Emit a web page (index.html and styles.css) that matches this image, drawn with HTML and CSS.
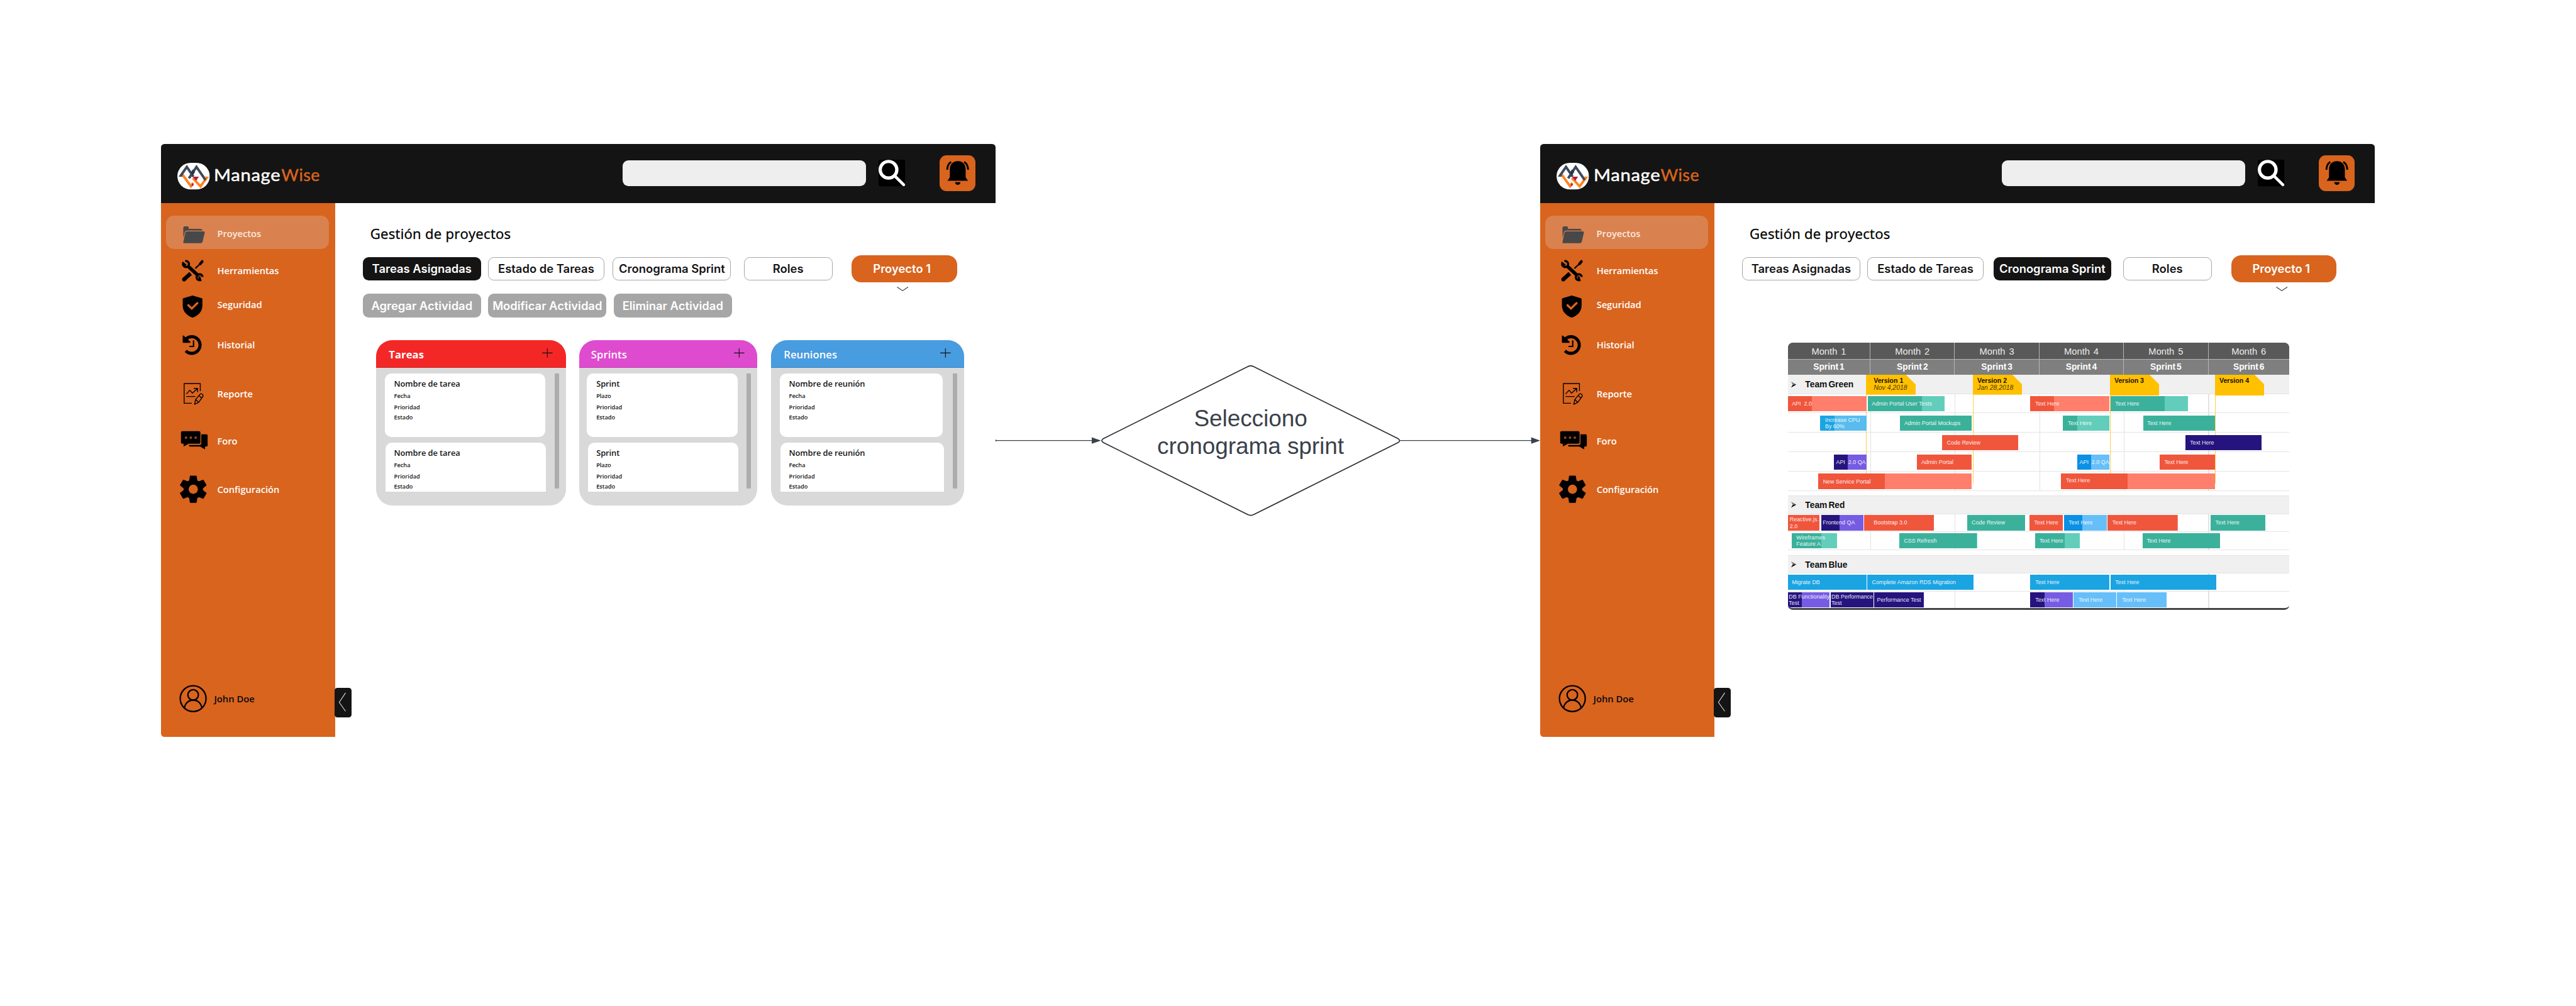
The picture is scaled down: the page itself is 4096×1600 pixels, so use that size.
FILE: index.html
```html
<!DOCTYPE html>
<html lang="es">
<head>
<meta charset="utf-8">
<title>ManageWise</title>
<link rel="stylesheet" href="styles.css">
</head>
<body>
<svg class="defs" aria-hidden="true">
  <symbol id="logo" viewBox="48 33 168 138">
    <rect x="48" y="33" width="168" height="138" rx="69" fill="#fff"/>
    <g fill="none" stroke-width="13">
      <path d="M128 112 168 155 203 106" stroke="#ff8421"/>
      <path d="M69 86 118 154 130 137" stroke="#ff8421"/>
      <path d="M108 113 147 54 194 122" stroke="#3c4a5e"/>
      <path d="M64 102 97 54 131 104" stroke="#3c4a5e"/>
    </g>
    <path d="M117 83l12-17 10 16-12 17z" fill="#2b3547"/>
    <path d="M53 105 68 90 76 105Z" fill="#3c4a5e"/>
    <path d="M188 105h24l-12 14z" fill="#ff8421"/>
    <path d="M128 105h31l-14 22zM125 138l9 9-13 10z" fill="#b5173b"/>
  </symbol>
  <symbol id="search" viewBox="78 78 138 138">
    <rect x="78" y="78" width="138" height="138" rx="10"/>
    <circle cx="129.500" cy="130" r="43" fill="none" stroke="#fff" stroke-width="17"/>
    <path d="M166 166 208 208" stroke="#fff" stroke-width="15" stroke-linecap="round"/>
  </symbol>
  <symbol id="bell" viewBox="393 54 186 186">
    <path d="M446 125C446 98 465 84 487 84S528 98 528 125V168L540 186H434L446 168Z"/>
    <path d="M473 193H501A14 14 0 0 1 473 193Z"/>
    <path d="M453 88Q433 100 432.500 129M520 88Q540 100 540.500 129" fill="none" stroke="#000" stroke-width="9"/>
  </symbol>
  <symbol id="folder" viewBox="57 340 144 120">
    <g fill="#484848">
      <path d="M78 371q0-8 8-8h14q6 0 6 7v6h62q8 1 10 9H99q-12 0-14 10L78 422Z"/>
      <path d="M98 389H184q6 0 5 6L178 442q-2 8-9 8H82q-5 0-4-5L88 396q2-7 10-7Z"/>
    </g>
  </symbol>
  <symbol id="tools" viewBox="57 532.500 144 120">
    <g fill="none" stroke="#000">
      <path d="M102 569 156 619" stroke-width="18"/>
      <path d="M88 543.500A15.500 15.500 0 1 1 77 554L92 566" stroke-width="11"/>
      <path d="M178 625A15.500 15.500 0 1 0 166 642L160 622" stroke-width="11"/>
      <path d="M82 638 116 607" stroke-width="20"/>
      <path d="M82 638h0" stroke-width="20" stroke-linecap="round"/>
      <path d="M140 581 166 557" stroke-width="7"/>
      <path d="M166 557 176 545" stroke-width="14" stroke-linecap="round"/>
    </g>
  </symbol>
  <symbol id="shield" viewBox="57 697 144 138">
    <path d="M126 720 173 734q4 1 4 6v30C177 803 155 824 126 835 97 824 75 803 75 770v-30q0-5 4-6Z"/>
    <path d="M104 770 122 787 151 759" fill="none" stroke="#d9641e" stroke-width="11" stroke-linecap="round"/>
  </symbol>
  <symbol id="history" viewBox="57 917 144 117">
    <path d="M91 1008A43 43 0 1 0 92 947" fill="none" stroke="#000" stroke-width="16"/>
    <path d="M75 932q1-6 6-2l34 31q2 6-4 6H79q-4 0-4-4Z"/>
    <path d="M131 954V985.500H109" fill="none" stroke="#000" stroke-width="7"/>
  </symbol>
  <symbol id="report" viewBox="31 411.800 48 40">
    <g fill="none" stroke="#000" stroke-width="1.500" stroke-linejoin="round">
      <path d="M67.300 427V414H39.500V448H52.700"/>
      <path d="M43.300 432 49.300 425.500 53.700 430.600 62.500 422.600M56 422.400H62.700V429M43.300 436.300H58.700"/>
      <path d="M57.500 449.800 59.300 441.500 67 432.300Q68.500 430.800 70 432L71.800 433.600Q72.800 435 71.700 436.500L64.500 446.500ZM59.300 441.500 64.500 446.500M65 434.500 69.800 439.200"/>
    </g>
  </symbol>
  <symbol id="forum" viewBox="31 492.800 50 40">
    <rect x="34" y="497" width="33.600" height="21.700" rx="2.500"/>
    <path d="M38.500 517v6.500l9-5z"/>
    <path d="M69 502.400h9a2 2 0 0 1 2 2v17a2 2 0 0 1-2 2h-2.500v5l-8.500-5H48.500l-1-2.600H66a3 3 0 0 0 3-3z"/>
    <g fill="#d9641e"><circle cx="42.700" cy="508" r="2"/><circle cx="51" cy="508" r="2"/><circle cx="59.300" cy="508" r="2"/></g>
    <g><circle cx="42.700" cy="508" r=".7"/><circle cx="51" cy="508" r=".7"/><circle cx="59.300" cy="508" r=".7"/></g>
  </symbol>
  <symbol id="gear" viewBox="31.500 572.700 48 48">
    <g id="tooth-pair"><path d="M49.800 574q.2-.8 1-.8h9.800q.8 0 1 .8L62.800 582H48.600ZM49.800 619.400q.2.800 1 .8h9.800q.8 0 1-.8L62.800 611H48.600Z"/></g>
    <use href="#tooth-pair" transform="rotate(60 55.700 596.700)"/>
    <use href="#tooth-pair" transform="rotate(120 55.700 596.700)"/>
    <circle cx="55.700" cy="596.700" r="16.800"/>
    <circle cx="55.700" cy="596.700" r="8" fill="#d9641e"/>
  </symbol>
  <symbol id="user" viewBox="31.500 933.900 48 48">
    <g fill="none" stroke="#000" stroke-width="2.500">
      <circle cx="55.500" cy="957.900" r="22.300"/>
      <circle cx="55.500" cy="951.500" r="9"/>
      <path d="M40.300 974.500C41.500 965.500 48 960.500 55.500 960.500S69.500 965.500 70.700 974.500"/>
    </g>
  </symbol>
  <symbol id="bullet" viewBox="0 0 9 10">
    <path d="M0 0 9 5 0 10 3 5.500Z" fill="#777"/><path d="M3 5.300 9 5 0 10Z"/>
  </symbol>
</svg>

<main class="board">
  <section class="window">
    <header class="topbar">
      <svg class="logo"><use href="#logo"/></svg>
      <div class="brand"><span class="brand-a">Manage</span><span class="brand-b">Wise</span></div>
      <div class="searchbox"></div>
      <svg class="search-icon"><use href="#search"/></svg>
      <div class="bell"><svg><use href="#bell"/></svg></div>
    </header>
    <div class="body">
      <nav class="sidebar">
        <div class="item item-projects"><svg class="h40"><use href="#folder"/></svg><span>Proyectos</span></div>
        <div class="item item-tools"><svg class="h40"><use href="#tools"/></svg><span>Herramientas</span></div>
        <div class="item item-security"><svg class="h46"><use href="#shield"/></svg><span>Seguridad</span></div>
        <div class="item item-history"><svg class="h39"><use href="#history"/></svg><span>Historial</span></div>
        <div class="item item-report"><svg class="h40"><use href="#report"/></svg><span>Reporte</span></div>
        <div class="item item-forum"><svg class="h40 wide"><use href="#forum"/></svg><span>Foro</span></div>
        <div class="item item-settings"><svg class="h48"><use href="#gear"/></svg><span>Configuración</span></div>
        <div class="account"><svg><use href="#user"/></svg><span>John Doe</span></div>
        <div class="collapse"><svg viewBox="0 0 30 51"><path d="M19 8.500 8 25 19 40.500" fill="none" stroke="#ddd" stroke-width="1.200"/></svg></div>
      </nav>
      <div class="content">
        <h1>Gestión de proyectos</h1>
        <div class="tabs">
          <div class="tab active">Tareas Asignadas</div>
          <div class="tab tab-state">Estado de Tareas</div>
          <div class="tab tab-sprint">Cronograma Sprint</div>
          <div class="tab tab-roles">Roles</div>
          <div class="project">Proyecto 1<svg class="chevron" viewBox="0 0 20 8"><path d="M.5.500 10 7 19.500.500" fill="none" stroke="#333" stroke-width="1.200"/></svg></div>
        </div>
        <div class="actions">
          <div class="action">Agregar Actividad</div>
          <div class="action">Modificar Actividad</div>
          <div class="action">Eliminar Actividad</div>
        </div>
        <div class="lists">
          <section class="list list-tasks">
            <header><h2>Tareas</h2><svg class="plus" viewBox="0 0 18 16"><path d="M0 8H18M9 0V16"/></svg></header>
            <div class="list-body">
              <div class="cards">
                <article class="card"><h3>Nombre de tarea</h3><p>Fecha</p><p>Prioridad</p><p>Estado</p></article>
                <article class="card cut"><h3>Nombre de tarea</h3><p>Fecha</p><p>Prioridad</p><p>Estado</p></article>
              </div>
              <div class="scroll"></div>
            </div>
          </section>
          <section class="list list-sprints">
            <header><h2>Sprints</h2><svg class="plus" viewBox="0 0 18 16"><path d="M0 8H18M9 0V16"/></svg></header>
            <div class="list-body">
              <div class="cards">
                <article class="card"><h3>Sprint</h3><p>Plazo</p><p>Prioridad</p><p>Estado</p></article>
                <article class="card cut"><h3>Sprint</h3><p>Plazo</p><p>Prioridad</p><p>Estado</p></article>
              </div>
              <div class="scroll"></div>
            </div>
          </section>
          <section class="list list-meetings">
            <header><h2>Reuniones</h2><svg class="plus" viewBox="0 0 18 16"><path d="M0 8H18M9 0V16"/></svg></header>
            <div class="list-body">
              <div class="cards">
                <article class="card"><h3>Nombre de reunión</h3><p>Fecha</p><p>Prioridad</p><p>Estado</p></article>
                <article class="card cut"><h3>Nombre de reunión</h3><p>Fecha</p><p>Prioridad</p><p>Estado</p></article>
              </div>
              <div class="scroll"></div>
            </div>
          </section>
        </div>
      </div>
    </div>
  </section>

  <div class="flow">
    <svg class="link link-in" viewBox="0 0 182 20"><path d="M.5 9V12M.5 10.500H166" stroke="#3a414a" stroke-width="1.500" fill="none"/><path d="M166 5 182 10.500 166 16Z" fill="#3a414a"/></svg>
    <div class="decision">
      <svg viewBox="0 0 516 260"><path d="M252.500 2.500Q258 -.5 263.500 2.500L512 126.500Q518 130 512 133.500L263.500 257.500Q258 260.500 252.500 257.500L4 133.500Q-2 130 4 126.500Z" fill="#fff" stroke="#282c33" stroke-width="1.800"/></svg>
      <p>Selecciono<br>cronograma sprint</p>
    </div>
    <svg class="link link-out" viewBox="0 0 242 20"><path d="M0 10.500H227" stroke="#3a414a" stroke-width="1.500"/><path d="M226.500 5 242 10.500 226.500 16Z" fill="#3a414a"/></svg>
  </div>

  <section class="window">
    <header class="topbar">
      <svg class="logo"><use href="#logo"/></svg>
      <div class="brand"><span class="brand-a">Manage</span><span class="brand-b">Wise</span></div>
      <div class="searchbox"></div>
      <svg class="search-icon"><use href="#search"/></svg>
      <div class="bell"><svg><use href="#bell"/></svg></div>
    </header>
    <div class="body">
      <nav class="sidebar">
        <div class="item item-projects"><svg class="h40"><use href="#folder"/></svg><span>Proyectos</span></div>
        <div class="item item-tools"><svg class="h40"><use href="#tools"/></svg><span>Herramientas</span></div>
        <div class="item item-security"><svg class="h46"><use href="#shield"/></svg><span>Seguridad</span></div>
        <div class="item item-history"><svg class="h39"><use href="#history"/></svg><span>Historial</span></div>
        <div class="item item-report"><svg class="h40"><use href="#report"/></svg><span>Reporte</span></div>
        <div class="item item-forum"><svg class="h40 wide"><use href="#forum"/></svg><span>Foro</span></div>
        <div class="item item-settings"><svg class="h48"><use href="#gear"/></svg><span>Configuración</span></div>
        <div class="account"><svg><use href="#user"/></svg><span>John Doe</span></div>
        <div class="collapse"><svg viewBox="0 0 30 51"><path d="M19 8.500 8 25 19 40.500" fill="none" stroke="#ddd" stroke-width="1.200"/></svg></div>
      </nav>
      <div class="content">
        <h1>Gestión de proyectos</h1>
        <div class="tabs">
          <div class="tab">Tareas Asignadas</div>
          <div class="tab tab-state">Estado de Tareas</div>
          <div class="tab tab-sprint active">Cronograma Sprint</div>
          <div class="tab tab-roles">Roles</div>
          <div class="project">Proyecto 1<svg class="chevron" viewBox="0 0 20 8"><path d="M.5.500 10 7 19.500.500" fill="none" stroke="#333" stroke-width="1.200"/></svg></div>
        </div>
        <div class="gantt">
          <div class="months"><span>Month 1</span><span>Month 2</span><span>Month 3</span><span>Month 4</span><span>Month 5</span><span>Month 6</span></div>
          <div class="sprints"><span>Sprint 1</span><span>Sprint 2</span><span>Sprint 3</span><span>Sprint 4</span><span>Sprint 5</span><span>Sprint 6</span></div>
          <div class="team team-green"><svg><use href="#bullet"/></svg>Team Green</div>
          <div class="lanes lanes-green">
            <div class="lane">
              <div class="bar red" style="--x:0;--w:135.700;--d:40.700;--p:7">API&nbsp; 2.0</div>
              <div class="bar teal" style="--x:138;--w:132.300;--d:93;--p:7">Admin Portal User Tests</div>
              <div class="bar red" style="--x:418.300;--w:137;--d:41.400;--p:8.700">Text Here</div>
              <div class="bar teal" style="--x:557.300;--w:132.700;--d:93;--p:7.700">Text Here</div>
            </div>
            <div class="lane">
              <div class="bar blue" style="--x:55.300;--w:80.400;--d:24.700;--p:9">Increase CPU<br>By 60%</div>
              <div class="bar teal" style="--x:193.300;--w:124.400;--d:125;--p:7.700">Admin Portal Mockups</div>
              <div class="bar teal" style="--x:474.700;--w:80.600;--d:25;--p:8.600">Text Here</div>
              <div class="bar teal" style="--x:613;--w:124.700;--d:125;--p:7.300">Text Here</div>
            </div>
            <div class="lane">
              <div class="bar red" style="--x:266.300;--w:131.700;--d:132;--p:8.400">Code Review</div>
              <div class="bar navy" style="--x:685.700;--w:132;--d:132;--p:8.300">Text Here</div>
            </div>
            <div class="lane">
              <div class="bar navy" style="--x:80;--w:55.700;--d:24;--p:3.300">API&nbsp; 2.0 QA</div>
              <div class="bar red" style="--x:222.700;--w:95;--d:95;--p:7.600">Admin Portal</div>
              <div class="bar azure" style="--x:499;--w:56.300;--d:24.300;--p:4.300">API&nbsp; 2.0 QA</div>
              <div class="bar red" style="--x:642;--w:95.700;--d:96;--p:7.700">Text Here</div>
            </div>
            <div class="lane">
              <div class="bar red" style="--x:52.300;--w:265.400;--d:115;--p:8.400">New Service Portal</div>
              <div class="bar red raised" style="--x:471.700;--w:266;--d:115.300;--p:8.300">Text Here</div>
            </div>
          </div>
          <div class="team team-red"><svg><use href="#bullet"/></svg>Team Red</div>
          <div class="lanes lanes-red">
            <div class="lane">
              <div class="bar red" style="--x:0;--w:54.700;--d:55;--p:3.300">Reactive.js.<br>2.0</div>
              <div class="bar navy" style="--x:57.300;--w:72.700;--d:31.700;--p:3">Frontend QA</div>
              <div class="bar red" style="--x:131.700;--w:120.300;--d:121;--p:16.600">Bootstrap 3.0</div>
              <div class="bar teal" style="--x:310;--w:99.700;--d:100;--p:7.300">Code Review</div>
              <div class="bar red" style="--x:417;--w:58;--d:58;--p:8.300">Text Here</div>
              <div class="bar azure" style="--x:477;--w:73.300;--d:32;--p:7.700">Text Here</div>
              <div class="bar red" style="--x:551.700;--w:121;--d:121;--p:8.300">Text Here</div>
              <div class="bar teal" style="--x:730;--w:93.700;--d:94;--p:7.700">Text Here</div>
            </div>
            <div class="lane">
              <div class="bar teal" style="--x:7;--w:77.700;--d:50.700;--p:7.700">Wireframes<br>Feature A</div>
              <div class="bar teal" style="--x:192.700;--w:134;--d:134;--p:7.600">CSS Refresh</div>
              <div class="bar teal" style="--x:426.300;--w:77.700;--d:51.400;--p:7.700">Text Here</div>
              <div class="bar teal" style="--x:612;--w:134;--d:134;--p:7.300">Text Here</div>
            </div>
          </div>
          <div class="team team-blue"><svg><use href="#bullet"/></svg>Team Blue</div>
          <div class="lanes lanes-blue">
            <div class="lane">
              <div class="bar blue" style="--x:0;--w:135.700;--d:136;--p:7">Migrate DB</div>
              <div class="bar blue" style="--x:137.300;--w:183;--d:183;--p:8">Complete Amazon RDS Migration</div>
              <div class="bar blue" style="--x:418.300;--w:136.700;--d:137;--p:8.700">Text Here</div>
              <div class="bar blue" style="--x:556.700;--w:183;--d:183;--p:8.300">Text Here</div>
            </div>
            <div class="lane">
              <div class="bar navy" style="--x:0;--w:71.700;--d:24;--p:1.700">DB Functionality<br>Test</div>
              <div class="bar navy" style="--x:73.700;--w:74;--d:74;--p:1.600">DB Performance<br>Test</div>
              <div class="bar navy" style="--x:149.300;--w:85.400;--d:86;--p:4.700">Performance Test</div>
              <div class="bar navy" style="--x:418.300;--w:73.400;--d:25.400;--p:8.700">Text Here</div>
              <div class="bar azure" style="--x:493.300;--w:73.700;--d:0;--p:8.400">Text Here</div>
              <div class="bar azure" style="--x:568.300;--w:85.700;--d:0;--p:8.400">Text Here</div>
            </div>
          </div>
          <div class="flag" style="--x:135.400;--h:34.700;--l:171.300;--p:13"><div><b>Version 1</b><i>Nov 4,2018</i></div></div>
          <div class="flag over" style="--x:319.200;--h:34.700;--l:188.300;--p:8"><div><b>Version 2</b><i>Jan 28,2018</i></div></div>
          <div class="flag" style="--x:555.700;--h:36;--l:171.300;--p:8"><div><b>Version 3</b></div></div>
          <div class="flag over" style="--x:737;--h:36;--l:188.300;--p:8"><div><b>Version 4</b></div></div>
        </div>
      </div>
    </div>
  </section>
</main>
</body>
</html>
```
FILE: styles.css
```css
* { box-sizing: border-box; }
body { margin: 0; background: #fff; overflow: hidden; }
h1, h2, h3, p { margin: 0; }
svg { display: block; flex: none; overflow: visible; }
.defs { position: absolute; width: 0; height: 0; }

.board {
  zoom: 0.92148;
  width: 4445px;
  height: 1736px;
  padding: 248px 0 0 278px;
  display: flex;
  align-items: flex-start;
  font-family: "Open Sans", "Noto Sans", sans-serif;
}

.window { flex: none; width: 1440px; height: 1024px; display: flex; flex-direction: column; }

/* top bar */
.topbar {
  height: 102px;
  flex: none;
  background: #141414;
  border-radius: 6px 6px 0 0;
  display: flex;
  align-items: flex-start;
  padding-left: 28px;
}
.logo { width: 56px; height: 46px; margin-top: 33px; }
.brand {
  width: 700px;
  margin: 32px 0 0 7.500px;
  display: flex;
  font: 400 29px/44px Lato, sans-serif;
  color: #fff;
  white-space: nowrap;
  letter-spacing: .7px;
  -webkit-text-stroke: .5px currentColor;
}
.brand-a { width: 116px; transform: scaleX(1.09); transform-origin: left; }
.brand-b { color: #d9641e; letter-spacing: .5px; }
.searchbox { width: 420px; height: 44px; margin: 29px 0 0 4.500px; border-radius: 10px; background: #eee; }
.search-icon { width: 46px; height: 46px; margin: 28px 0 0 22px; }
.bell { width: 62px; height: 62px; margin: 20px 0 0 59px; border-radius: 12px; background: #d9641e; }
.bell svg { width: 62px; height: 62px; }

.body { flex: 1; display: flex; }

/* sidebar */
.sidebar {
  position: relative;
  width: 300px;
  flex: none;
  background: #d9641e;
  border-bottom-left-radius: 6px;
  padding-top: 22.500px;
  color: #fff;
  font-size: 16px;
  font-weight: 600;
}
.item { display: flex; align-items: center; padding-left: 31px; gap: 18px; }
.item svg { width: 48px; }
.item svg.wide { width: 50px; margin-right: -2px; }
.item span { letter-spacing: -.05px; }
.h39 { height: 39px; }
.h40 { height: 40px; }
.h46 { height: 46px; }
.h48 { height: 48px; }
.item-projects { height: 57px; width: 282px; margin-left: 8px; padding: 4px 0 0 23px; border-radius: 14px; background: #d9824f; color: #fbe9df; }
.item-tools { height: 75px; }
.item-security { height: 41px; }
.item-security svg { margin-top: -3px; margin-bottom: -3px; }
.item-history { height: 99px; }
.item-report { height: 70px; }
.item-forum { height: 92px; }
.item-settings { height: 76px; }
.account { display: flex; align-items: center; height: 48px; margin-top: 299px; padding-left: 31.500px; gap: 12px; color: #0a0a0a; }
.account svg { width: 48px; height: 48px; }
.collapse {
  position: absolute;
  left: 299px;
  top: 837.500px;
  width: 30px;
  height: 51px;
  border-radius: 5px;
  background: #141414;
}

/* content */
.content { flex: 1; padding: 36px 0 0 48px; }
h1 { margin-left: 13px; font-size: 24px; line-height: 33px; font-weight: 500; letter-spacing: .28px; color: #000; -webkit-text-stroke: .4px #000; }
.tabs { display: flex; align-items: center; height: 46px; margin-top: 22px; }
.tab, .action, .project {
  display: flex;
  align-items: center;
  justify-content: center;
  font: 600 20px/24px Inter, sans-serif;
  white-space: nowrap;
}
.tab { width: 204px; height: 41px; border: 1.500px solid #a6a6a6; border-radius: 10px; background: #fff; color: #141414; }
.tab.active { border: 0; background: #141414; color: #fff; }
.tab-state { width: 201px; margin-left: 12px; }
.tab-sprint { margin-left: 14.500px; }
.tab-sprint.active { width: 203px; margin-left: 17px; margin-right: -1.500px; }
.tab-roles { width: 153px; margin-left: 22px; }
.project { position: relative; width: 182px; height: 46px; margin-left: 33.500px; padding-right: 9px; border-radius: 17px; background: #d9641e; color: #fff; }
.chevron { position: absolute; left: 78px; top: 54px; width: 20px; height: 8px; }
.actions { display: flex; gap: 12.500px; margin-top: 20px; }
.action { width: 204px; height: 41px; border-radius: 10px; background: #a6a6a6; color: #fff; }

/* lists */
.lists { display: flex; margin-top: 39.500px; padding-left: 23px; }
.list { height: 285px; border-radius: 28px; overflow: hidden; background: #d9d9d9; }
.list-tasks { width: 327.500px; }
.list-sprints { width: 307px; margin-left: 23px; }
.list-meetings { width: 333px; margin-left: 24px; }
.list header { height: 47px; display: flex; justify-content: space-between; align-items: flex-start; padding: 12px 23.500px 0 22px; border-bottom: 1px solid rgba(0, 0, 0, .15); }
.list-tasks header { background: #f42727; }
.list-sprints header { background: #df4bcf; padding-left: 20.500px; padding-right: 21.500px; }
.list-meetings header { background: #489ce0; }
h2 { font-size: 18px; line-height: 25px; font-weight: 600; color: #fff; letter-spacing: .1px; }
.list-tasks h2 { font-weight: 700; }
.plus { width: 18px; height: 16px; margin-top: 2px; stroke: #111; stroke-width: 1.200; }
.list-body { display: flex; justify-content: space-between; padding: 10px 12px 0 15px; }
.list-sprints .list-body { padding-left: 13.500px; padding-right: 11px; }
.list-sprints .card { width: 260px; }
.list-meetings .card { width: 281.500px; }
.card { width: 277px; height: 109.500px; padding: 8px 0 0 16px; border-radius: 11px; background: #fff; color: #141414; }
.card.cut { height: 84.500px; margin: 10px 0 0 1.500px; padding-left: 14.500px; border-radius: 11px 11px 0 0; }
.card h3 { font-size: 14px; line-height: 20px; font-weight: 600; letter-spacing: -.1px; }
.card p { font-size: 10px; line-height: 17px; font-weight: 600; margin-top: 2.600px; }
.card p:last-child { margin-top: .4px; }
.scroll { width: 7.500px; height: 199px; background: #acacac; }

/* flow between the windows */
.flow { flex: none; width: 940px; display: flex; align-items: center; margin-top: 382px; height: 260px; }
.link { height: 20px; }
.link-in { width: 182px; }
.link-out { width: 242px; }
.decision { width: 516px; height: 260px; display: grid; }
.decision svg { grid-area: 1 / 1; width: 516px; height: 260px; }
.decision p {
  grid-area: 1 / 1;
  position: relative;
  margin-top: 69px;
  text-align: center;
  font: 40px/48px "Liberation Sans", Arial, sans-serif;
  color: #3a414a;
}

/* gantt */
.gantt {
  position: relative;
  width: 865px;
  height: 461px;
  margin: 105px 0 0 79px;
  border-radius: 8px;
  overflow: hidden;
  background: #fff;
  border-bottom: 4px solid #444;
  font-family: "Liberation Sans", Arial, sans-serif;
}
.months, .sprints {
  display: grid;
  grid-template-columns: 142.700px 145.600px 146px 145.700px 146px 139px;
  text-align: center;
  color: #ececec;
}
.months span, .sprints span { border-right: 1.200px solid #b5b5b5; }
.months span:last-child, .sprints span:last-child { border: 0; }
.months { height: 29px; background: #595959; border-bottom: 1.200px solid #b5b5b5; font-size: 16px; line-height: 31px; word-spacing: 2px; }
.sprints { height: 26px; background: #7f7f7f; font-size: 15px; line-height: 26px; font-weight: 700; word-spacing: -2px; color: #fff; }
.team {
  display: flex;
  align-items: center;
  gap: 15px;
  padding-left: 6px;
  background: #f0f0f0;
  border-bottom: 1.500px solid #e4e4e4;
  font-size: 15px;
  font-weight: 700;
  word-spacing: -2px;
  color: #111;
}
.team svg { width: 9px; height: 10px; }
.team-green { height: 33px; padding-top: 1px; }
.team-red, .team-blue { border-top: 1.500px solid #e4e4e4; height: 32px; }
.team-red { margin-top: 8.300px; }
.team-blue { margin-top: 8.700px; }
.lanes {
  background-image: linear-gradient(90deg, transparent 142px, #e2e2e2 142px, #e2e2e2 143.200px, transparent 143.200px, transparent 287.700px, #e2e2e2 287.700px, #e2e2e2 288.900px, transparent 288.900px, transparent 433.700px, #e2e2e2 433.700px, #e2e2e2 434.900px, transparent 434.900px, transparent 579.400px, #e2e2e2 579.400px, #e2e2e2 580.600px, transparent 580.600px, transparent 725.400px, #e2e2e2 725.400px, #e2e2e2 726.600px, transparent 726.600px);
}
.lane { display: grid; border-bottom: 1.400px solid #e4e4e4; }
.lanes-green .lane { height: 33.450px; padding-top: 4px; }
.lanes-red .lane { height: 31px; padding-top: 1.800px; }
.lanes-blue .lane { height: 30.700px; padding-top: 1.600px; }
.lanes-blue .lane:last-child { height: 30px; border: 0; }
.bar {
  grid-area: 1 / 1;
  position: relative;
  z-index: 1;
  margin-left: calc(var(--x) * 1px);
  width: calc(var(--w) * 1px);
  height: 26.300px;
  padding-left: calc(var(--p) * 1px);
  display: flex;
  align-items: center;
  white-space: nowrap;
  font-size: 9.700px;
  line-height: 11px;
  color: rgba(255, 255, 255, .92);
  background: linear-gradient(90deg, var(--done) calc(var(--d) * 1px), var(--todo) calc(var(--d) * 1px));
}
.raised { padding-bottom: 3px; }
.red { --done: #f0563c; --todo: #ff7f6c; }
.teal { --done: #3bb19b; --todo: #62cdba; }
.blue { --done: #1ba4e2; --todo: #58bdee; }
.azure { --done: #0a90e4; --todo: #66bff9; }
.navy { --done: #26147e; --todo: #755ce2; }

.flag { position: absolute; top: 54.700px; left: calc(var(--x) * 1px); height: calc(var(--l) * 1px); border-left: 1.300px solid #ffd04a; }
.flag div {
  width: 85.500px;
  height: calc(var(--h) * 1px);
  margin-left: -1.300px;
  padding: 3px 0 0 calc(var(--p) * 1px);
  background: #ffc000;
  clip-path: polygon(0 0, 80% 0, 100% 17px, 100% 100%, 0 100%);
  font-size: 11.500px;
  line-height: 13.500px;
  color: #161200;
}
.flag b, .flag i { display: block; white-space: nowrap; }
.flag i { font-size: 11.300px; color: #4d3a00; }
.over { z-index: 0; }
```
